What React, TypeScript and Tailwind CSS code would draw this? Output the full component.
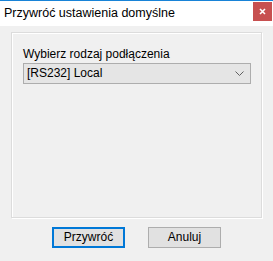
export default function App() {
  const font = { fontFamily: '"Liberation Sans", Arial, sans-serif' }
  return (
    <div
      className="w-[273px] h-[261px] flex flex-col bg-[#f0f0f0] text-[12px] text-black overflow-hidden"
      style={font}
    >
      {/* title bar */}
      <div className="h-[26px] bg-white border-t border-[#1883d7] flex items-start justify-between">
        <span className="pl-[4px] pt-[5px] leading-[15px] text-[12.5px]">Przywróć ustawienia domyślne</span>
        <div className="w-[19px] h-[19px] mt-[1px] mr-[1px] bg-[#c75050] flex items-center justify-center">
          <svg width="7" height="7" viewBox="0 0 7 7">
            <path d="M1 1L6 6M6 1L1 6" stroke="white" strokeWidth="1.6" />
          </svg>
        </div>
      </div>

      {/* body */}
      <div className="flex-1 flex flex-col pt-[6px]">
        <div className="ml-[11px] w-[251px] h-[186px] border border-[#dcdcdc] shadow-[inset_1px_1px_0_#ffffff,1px_1px_0_#ffffff] px-[11px] pt-[14px]">
          <div className="leading-[15px] mb-[1px]">Wybierz rodzaj podłączenia</div>
          <div className="w-[228px] h-[21px] bg-[#e5e5e5] border border-[#adadad] flex items-center justify-between pl-[3px] pr-[6px]">
            <span className="leading-[15px]">[RS232] Local</span>
            <svg width="9" height="6" viewBox="0 0 9 6">
              <path d="M0.5 0.5L4.5 4.5L8.5 0.5" stroke="#606060" strokeWidth="1" fill="none" />
            </svg>
          </div>
        </div>

        <div className="flex gap-[23px] ml-[52px] mt-[9px]">
          <button className="w-[73px] h-[21px] bg-[#e1e1e1] border-2 border-[#0078d7] flex items-center justify-center leading-[15px]">
            Przywróć
          </button>
          <button className="w-[73px] h-[21px] bg-[#e1e1e1] border border-[#adadad] flex items-center justify-center leading-[15px]">
            Anuluj
          </button>
        </div>
      </div>
    </div>
  )
}
